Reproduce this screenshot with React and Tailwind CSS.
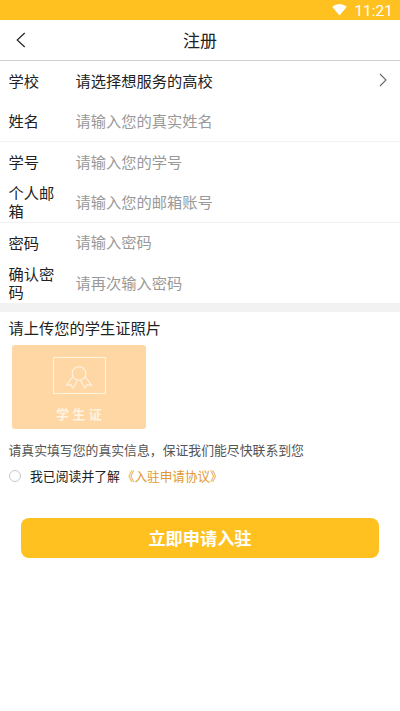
import React, { useState } from 'react';

const fields = [
  { label: '姓名', placeholder: '请输入您的真实姓名', type: 'text', line: 'border-[#f3f3f3]' },
  { label: '学号', placeholder: '请输入您的学号', type: 'text', line: 'border-transparent' },
  { label: '个人邮箱', placeholder: '请输入您的邮箱账号', type: 'text', line: 'border-[#f3f3f3]' },
  { label: '密码', placeholder: '请输入密码', type: 'password', line: 'border-transparent' },
  { label: '确认密码', placeholder: '请再次输入密码', type: 'password', line: 'border-transparent' },
];

const StatusBar = () => (
  <div className="flex h-5 items-center justify-end bg-[#ffc120] pr-[7px] text-white">
    <svg className="mr-[7px] h-3 w-[15px]" viewBox="0 0 15 12" fill="currentColor">
      <path d="M0.2 2.8 Q7.5 -2.6 14.8 2.8 L7.5 11.6 Z" />
    </svg>
    <span className="pt-[3px] font-[Roboto] text-[15.5px] leading-none">11:21</span>
  </div>
);

const Header = () => (
  <header className="grid h-[41px] grid-cols-[40px_1fr_40px] items-center border-b border-[#d0d0d0]">
    <button type="button" className="pl-4">
      <svg className="h-4 w-[10px]" viewBox="0 0 10 16" fill="none" stroke="#222" strokeWidth="1.2">
        <path d="M8.7 1 L1.2 8 L8.7 15" />
      </svg>
    </button>
    <h1 className="pb-px text-center text-[17px] leading-none">注册</h1>
  </header>
);

const Field = ({ label, line, children }) => (
  <div className={`flex h-[40.4px] items-center border-b pb-px pl-[8.5px] pr-[13px] ${line}`}>
    <span className="w-[67px] pr-[19px] leading-[18.5px]">{label}</span>
    {children}
  </div>
);

const CardUpload = () => (
  <button
    type="button"
    className="ml-3 mt-[7px] flex h-[84px] w-[134px] flex-col items-center rounded-[3px] bg-[#ffd7a5] pt-3 text-[#fff3e2]"
  >
    <svg className="h-[37px] w-[53px]" viewBox="0 0 53 37" fill="none" stroke="currentColor" strokeWidth="1.1">
      <rect x="0.5" y="0.5" width="52" height="36" rx="1" />
      <circle cx="26" cy="16.5" r="6.8" />
      <path d="M19.8 19.5 L13.5 28.2 L17.8 27.6 L20 31.2 L24.6 23.3" />
      <path d="M32.2 19.5 L38.5 28.2 L34.2 27.6 L32 31.2 L27.4 23.3" />
    </svg>
    <span className="mt-[12px] pl-[3px] text-[13px] font-bold leading-[15px] tracking-[3.4px]">学生证</span>
  </button>
);

const App = () => {
  const [agreed, setAgreed] = useState(false);

  return (
    <div className="min-h-[711px] w-full bg-white font-['Noto_Sans_CJK_SC',sans-serif] text-[15.25px] text-[#222]">
      <StatusBar />
      <Header />
      <form>
        <Field label="学校" line="border-transparent">
          <span className="flex-1 leading-none">请选择想服务的高校</span>
          <svg className="h-[14px] w-2" viewBox="0 0 8 14" fill="none" stroke="#666" strokeWidth="1.1">
            <path d="M1 1 L7 7 L1 13" />
          </svg>
        </Field>
        {fields.map((field) => (
          <Field key={field.label} label={field.label} line={field.line}>
            <input
              type={field.type}
              placeholder={field.placeholder}
              className="min-w-0 flex-1 outline-none placeholder:text-[#999]"
            />
          </Field>
        ))}
        <div className="h-[9px] bg-[#f2f2f2]" />
        <p className="pl-[8.5px] pt-[5px] leading-[21px]">请上传您的学生证照片</p>
        <CardUpload />
        <p className="mt-[11px] pl-[8.5px] text-[12.85px] leading-5 text-[#555]">
          请真实填写您的真实信息，保证我们能尽快联系到您
        </p>
        <div className="mt-[6px] flex items-center pl-[9px] text-[12.85px] leading-5">
          <button
            type="button"
            onClick={() => setAgreed(!agreed)}
            className={`mr-[9px] size-3 rounded-full border border-[#c8c8c8] ${agreed ? 'bg-[#ffc120]' : 'bg-white'}`}
          />
          <span>我已阅读并了解</span>
          <a className="ml-[2px] text-[12.6px] text-[#e0982f]">《入驻申请协议》</a>
        </div>
        <button
          type="button"
          className="mx-[21px] mt-8 flex h-10 w-[358px] items-center justify-center rounded-[8px] bg-[#ffc120] text-[17.2px] font-bold text-white"
        >
          立即申请入驻
        </button>
      </form>
    </div>
  );
};

export default App;
